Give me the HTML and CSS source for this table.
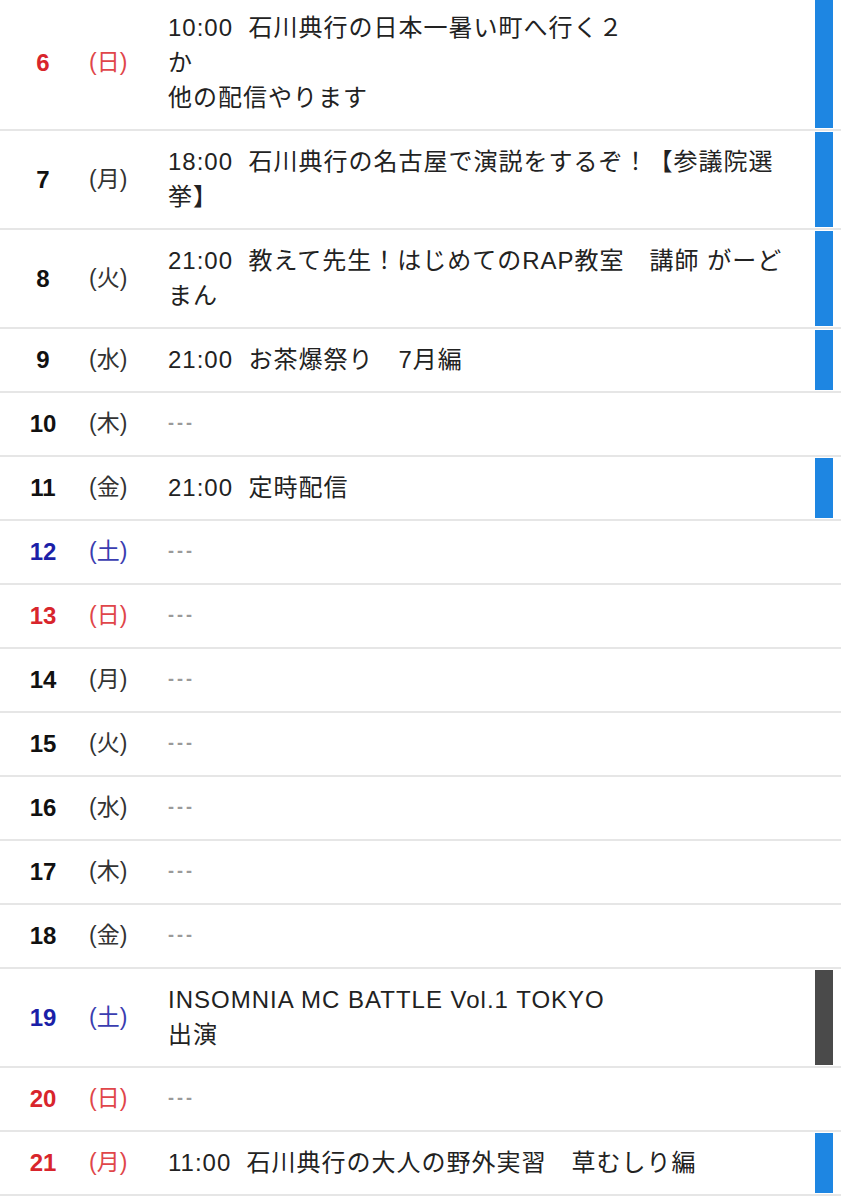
FILE: index.html
```html
<!DOCTYPE html>
<html lang="ja">
<head>
  <meta charset="UTF-8" />
  <meta name="viewport" content="width=device-width, initial-scale=1.0"/>
  <title>配信スケジュール</title>
  <link rel="stylesheet" href="styles.css">
</head>
<body>
  <!-- Schedule list -->
  <div class="schedule">
    <div class="row sun">
      <div class="num">6</div><div class="dow">(日)</div>
      <div class="event">10:00&nbsp;&nbsp;石川典行の日本一暑い町へ行く２<br>か<br>他の配信やります</div>
      <div class="mark blue"></div>
    </div>
    <div class="row">
      <div class="num">7</div><div class="dow">(月)</div>
      <div class="event">18:00&nbsp;&nbsp;石川典行の名古屋で演説をするぞ！【参議院選<br>挙】</div>
      <div class="mark blue"></div>
    </div>
    <div class="row">
      <div class="num">8</div><div class="dow">(火)</div>
      <div class="event">21:00&nbsp;&nbsp;教えて先生！はじめてのRAP教室　講師 がーど<br>まん</div>
      <div class="mark blue"></div>
    </div>
    <div class="row">
      <div class="num">9</div><div class="dow">(水)</div>
      <div class="event">21:00&nbsp;&nbsp;お茶爆祭り　7月編</div>
      <div class="mark blue"></div>
    </div>
    <div class="row">
      <div class="num">10</div><div class="dow">(木)</div>
      <div class="event empty">---</div>
      <div class="mark"></div>
    </div>
    <div class="row">
      <div class="num">11</div><div class="dow">(金)</div>
      <div class="event">21:00&nbsp;&nbsp;定時配信</div>
      <div class="mark blue"></div>
    </div>
    <div class="row sat">
      <div class="num">12</div><div class="dow">(土)</div>
      <div class="event empty">---</div>
      <div class="mark"></div>
    </div>
    <div class="row sun">
      <div class="num">13</div><div class="dow">(日)</div>
      <div class="event empty">---</div>
      <div class="mark"></div>
    </div>
    <div class="row">
      <div class="num">14</div><div class="dow">(月)</div>
      <div class="event empty">---</div>
      <div class="mark"></div>
    </div>
    <div class="row">
      <div class="num">15</div><div class="dow">(火)</div>
      <div class="event empty">---</div>
      <div class="mark"></div>
    </div>
    <div class="row">
      <div class="num">16</div><div class="dow">(水)</div>
      <div class="event empty">---</div>
      <div class="mark"></div>
    </div>
    <div class="row">
      <div class="num">17</div><div class="dow">(木)</div>
      <div class="event empty">---</div>
      <div class="mark"></div>
    </div>
    <div class="row">
      <div class="num">18</div><div class="dow">(金)</div>
      <div class="event empty">---</div>
      <div class="mark"></div>
    </div>
    <div class="row sat">
      <div class="num">19</div><div class="dow">(土)</div>
      <div class="event">INSOMNIA MC BATTLE Vol.1 TOKYO<br>出演</div>
      <div class="mark dark"></div>
    </div>
    <div class="row sun">
      <div class="num">20</div><div class="dow">(日)</div>
      <div class="event empty">---</div>
      <div class="mark"></div>
    </div>
    <div class="row sun">
      <div class="num">21</div><div class="dow">(月)</div>
      <div class="event">11:00&nbsp;&nbsp;石川典行の大人の野外実習　草むしり編</div>
      <div class="mark blue"></div>
    </div>
  </div>
</body>
</html>
```

FILE: styles.css
```css
:root {
  --text: #222222;
  --line: #e6e6e6;
  --red: #d8252c;
  --red-light: #e0464a;
  --navy: #1b1fa8;
  --navy-light: #3a3db0;
  --blue: #1e86e2;
  --dark: #4a4a4a;
}
* {
  box-sizing: border-box;
}
body {
  margin: 0;
  background: #ffffff;
  color: var(--text);
  font-family: "Liberation Sans", "Noto Sans CJK JP", sans-serif;
  font-size: 22px;
  overflow: hidden;
}
.schedule {
  margin-top: -3px;
}
.row {
  display: grid;
  grid-template-columns: 86px 74px 1fr 18px;
  padding-right: 8px;
  border-bottom: 2px solid var(--line);
  min-height: 64px;
}
.num,
.dow,
.event {
  display: flex;
  align-items: center;
  line-height: 35px;
  padding: 13px 0 14px;
}
.num {
  justify-content: center;
  font-weight: bold;
  font-size: 24px;
  color: #111111;
}
.dow {
  padding-left: 3px;
  font-size: 23px;
  color: #333333;
}
.event {
  display: block;
  align-self: center;
  padding-left: 8px;
  font-size: 24px;
  letter-spacing: 1px;
  white-space: nowrap;
}
.event.empty {
  color: #9a9a9a;
  font-size: 18px;
  font-weight: bold;
  letter-spacing: 3px;
}
.mark {
  margin: 1px 0;
}
.mark.blue {
  background: var(--blue);
}
.mark.dark {
  background: var(--dark);
}
.sun .num {
  color: var(--red);
}
.sun .dow {
  color: var(--red-light);
}
.sat .num {
  color: var(--navy);
}
.sat .dow {
  color: var(--navy-light);
}
```
